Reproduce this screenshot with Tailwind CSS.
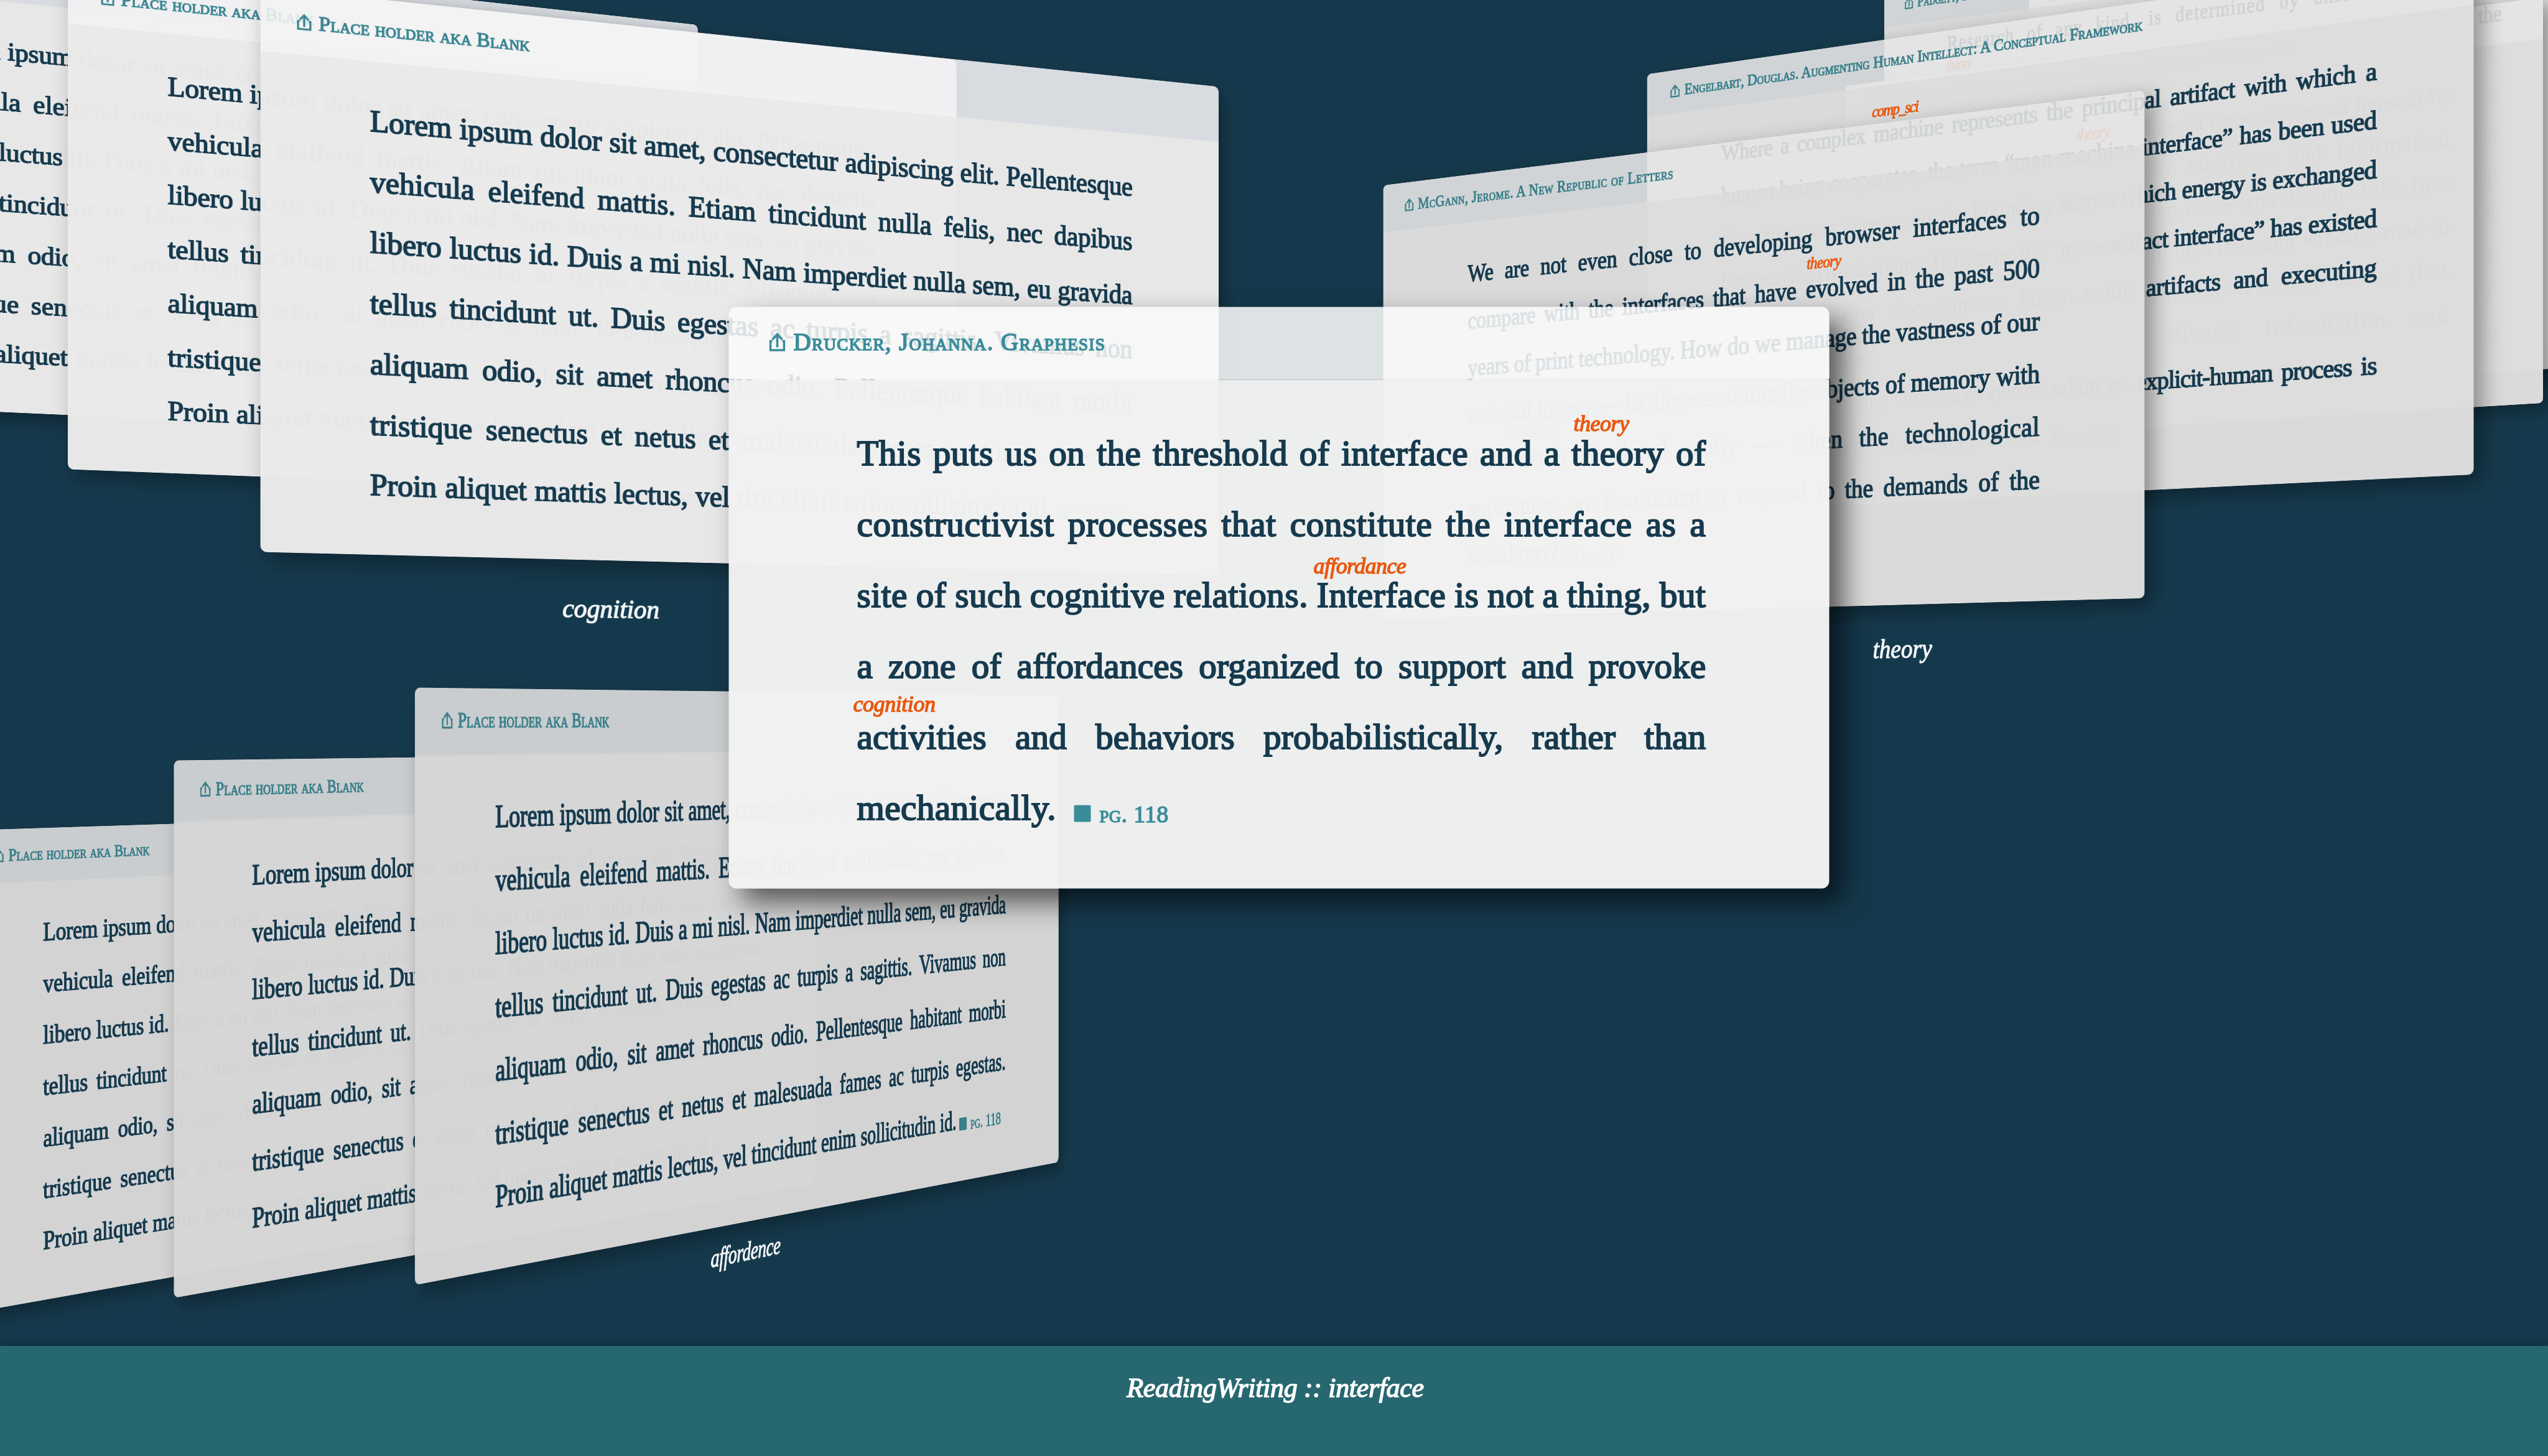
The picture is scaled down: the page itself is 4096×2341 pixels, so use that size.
<!DOCTYPE html>
<html lang="en">
<head>
<meta charset="utf-8">
<title>ReadingWriting :: interface</title>
<script src="https://cdn.jsdelivr.net/npm/@tailwindcss/browser@4"></script>
</head>
<body class="bg-[#15394c]">
<div class="flex h-[2341px] w-[4096px] flex-col overflow-hidden bg-[#15394c] font-['Liberation_Serif',serif]">
  <main id="space" class="relative min-h-0 flex-1"></main>
  <footer class="relative z-10 flex h-[177px] shrink-0 items-start justify-center bg-[#276770] pt-[41px] pl-1 text-[43px] leading-[54px] text-white italic shadow-[0_-4px_16px_rgba(10,25,45,0.35)]">
    <span data-w="477" class="whitespace-nowrap [-webkit-text-stroke:1.5px_#ffffff]" style="font-size:44px">ReadingWriting :: interface</span>
  </footer>
</div>

<script>
// Colour themes, one per wall of the space
const themes = {
  center: { head: 'bg-[#f9f9f9]/88', body: 'bg-[#f1f1f1]/[0.985]', shadow: 'shadow-[22px_22px_44px_rgba(0,0,0,0.6)]', teal: 'text-[#3a8c9a]' },
  left:   { head: 'bg-[#f3f3f4]/88', body: 'bg-[#eaeaea]/[0.985]', shadow: 'shadow-[12px_18px_40px_rgba(0,0,0,0.32)]', teal: 'text-[#3a8591]' },
  right:  { head: 'bg-[#e4e4e4]/90', body: 'bg-[#dcdcdc]/[0.985]', shadow: 'shadow-[18px_16px_44px_rgba(0,0,0,0.36)]', teal: 'text-[#3a808b]' },
  below:  { head: 'bg-[#dddddd]/90', body: 'bg-[#d5d5d5]/[0.985]', shadow: 'shadow-[12px_18px_40px_rgba(0,0,0,0.32)]', teal: 'text-[#3a7f8a]' }
};

const lorem = {
  w: 1960, h: 1035, head: 117, lead: 112.9, size: 57, top: 55, left: 197, width: 1562,
  title: 'Place holder aka Blank', titleW: 391, titleSize: 38,
  lines: [
    ['Lorem ipsum dolor sit amet, consectetur adipiscing elit. Pellentesque', 15],
    ['vehicula eleifend mattis. Etiam tincidunt nulla felis, nec dapibus', 26],
    ['libero luctus id. Duis a mi nisl. Nam imperdiet nulla sem, eu gravida', 15],
    ['tellus tincidunt ut. Duis egestas ac turpis a sagittis. Vivamus non', 24],
    ['aliquam odio, sit amet rhoncus odio. Pellentesque habitant morbi', 26],
    ['tristique senectus et netus et malesuada fames ac turpis egestas.', 25],
    ['Proin aliquet mattis lectus, vel tincidunt enim sollicitudin id.', 15, 1382]
  ],
  pg: { gap: 10 }
};

const cards = [
  { theme: 'right', quad: [3262,-30, 4300,-175, 4300,540, 3262,590], w: 1960, h: 1035, head: 101, lead: 87.4, size: 46, top: 16, left: 197, width: 1562,
    title: 'Steyerl, Hito. The Spam of the Earth', titleSize: 33, lines: [] },
  { theme: 'right', quad: [3029,-22, 4150,-177, 4150,590, 3029,658], w: 1960, h: 1035, head: 101, lead: 87.4, size: 50, top: 15, left: 197, width: 1562,
    title: 'Padgett, Zuckerman. Research and Discovery', titleSize: 36,
    lines: [
      ['Research of any kind, is determined by unfettered access to', 38], ['the', 0, -1], ['dynamic', 0, -1], ['for', 0, -1], ['that', 0, -1],
      ['giving,', 0, -1], ['their', 0, -1], ['frontier', 0, -1], ['archive’,', 0, -1], ['the', 0, -1]
    ],
    notes: [['theory', 195, 224, 75]] },
  { theme: 'right', quad: [2967,138, 4088,-4, 4088,648, 2967,715], w: 1960, h: 1035, head: 105, lead: 113.5, size: 57, top: 59, left: 236, width: 1489,
    title: 'Lovink, Geert. The society of the query and the Googlization of our lives', titleW: 1217, titleSize: 36,
    lines: [
      ['That the computer would serve media purposes was not foreseen by', 22],
      ['its makers. Today’s clumsy interfaces and information', 38],
      ['overload cannot be blamed on those who designed the first', 20],
      ['machines. For all of us it will be a long and winding road to', 18],
      ['turn the calculator into a universal human device that', 20],
      ['serves our rich and diverse information and', 67],
      ['communication purposes.', 15, 0]
    ],
    notes: [['theory', 1106, 300, 80]] },
  { theme: 'right', quad: [2647.7,119.3, 3976.5,-74, 3976.5,763, 2647.7,826.7], w: 1960, h: 1035, head: 101, lead: 99.4, size: 53, top: 58, left: 205, width: 1557,
    title: 'Engelbart, Douglas. Augmenting Human Intellect: A Conceptual Framework', titleW: 1149, titleSize: 36,
    lines: [
      ['Where a complex machine represents the principal artifact with which a', 21],
      ['human being cooperates, the term “man-machine interface” has been used', 15],
      ['for some years to represent the boundary across which energy is exchanged', 13],
      ['between the two domains. However, the “man-artifact interface” has existed', 13],
      ['for centuries, ever since humans began using artifacts and executing', 28],
      ['complex processes.', 13, 0],
      ['Exchange across this “interface” occurs when an explicit-human process is', 19],
      ['coupled to an explicit-artifact process.', 13, 0]
    ],
    pg: { gap: 24 },
    notes: [['comp_sci', 601, 170, 116], ['theory', 1100, 277, 77]] },
  { theme: 'right', quad: [2223.6,298, 3447.4,145.2, 3447.4,961.8, 2223.6,995], w: 1960, h: 1035, head: 112, lead: 110, size: 57, top: 65, left: 250, width: 1475,
    title: 'McGann, Jerome. A New Republic of Letters', titleW: 718, titleSize: 37,
    lines: [
      ['We are not even close to developing browser interfaces to', 32],
      ['compare with the interfaces that have evolved in the past 500', 24],
      ['years of print technology. How do we manage the vastness of our', 14],
      ['material history — let alone examine the objects of memory with', 15],
      ['their depth in digital acuity — when the technological', 41],
      ['apparatuses are insufficient to respond to the demands of the', 25],
      ['social text?', 15, 0]
    ],
    pg: { gap: 24 },
    label: ['theory', 1330, 1148, 143, 56],
    notes: [['theory', 1166, 298, 85], ['literature', 364, 624, 129]] },
  { theme: 'left', quad: [-273,-112, 1121.7,40, 1121.7,713, -273,650], ...lorem },
  { theme: 'left', quad: [109,-53.5, 1537.5,96.5, 1537.5,809, 109,754.5], ...lorem },
  { theme: 'left', quad: [418.6,-20.8, 1959,139.4, 1959,925, 418.6,887.5], ...lorem, label: ['cognition', 558, 1145, 190, 51] },
  { theme: 'below', quad: [-50,1335, 939,1303.4, 939,1935.6, -50,2111.6], ...lorem },
  { theme: 'below', quad: [279.5,1222.6, 1310,1209.5, 1310,1903.6, 279.5,2086.9], ...lorem },
  { theme: 'below', quad: [666.8,1105.5, 1701.6,1118, 1701.6,1868.6, 666.8,2066.2], ...lorem, label: ['affordence', 783, 1110, 210, 51] },
  { theme: 'center', quad: [1171.5,493.5, 2940,493.5, 2940,1428, 1171.5,1428], w: 1768.5, h: 934.5, head: 117, lead: 113.9, size: 57, top: 61, left: 206, width: 1365,
    title: 'Drucker, Johanna. Graphesis', titleW: 502, titleSize: 39,
    lines: [
      ['This puts us on the threshold of interface and a theory of', 19],
      ['constructivist processes that constitute the interface as a', 22],
      ['site of such cognitive relations. Interface is not a thing, but', 14],
      ['a zone of affordances organized to support and provoke', 25],
      ['activities and behaviors probabilistically, rather than', 46],
      ['mechanically.', 0, 320]
    ],
    pg: { gap: 29 },
    notes: [['theory', 1358, 199.7, 89], ['affordance', 940, 428.7, 149], ['cognition', 200, 650.6, 132]] }
];

// matrix3d that carries a w x h box onto four corners (clockwise from top left)
function project(w, h, [x0, y0, x1, y1, x2, y2, x3, y3]) {
  const dx1 = x1 - x2, dx2 = x3 - x2, sx = x0 - x1 + x2 - x3;
  const dy1 = y1 - y2, dy2 = y3 - y2, sy = y0 - y1 + y2 - y3;
  const d = dx1 * dy2 - dx2 * dy1;
  const g = (sx * dy2 - dx2 * sy) / d, k = (dx1 * sy - sx * dy1) / d;
  return `matrix3d(${[
    (x1 - x0 + g * x1) / w, (y1 - y0 + g * y1) / w, 0, g / w,
    (x3 - x0 + k * x3) / h, (y3 - y0 + k * y3) / h, 0, k / h,
    0, 0, 1, 0,
    x0, y0, 0, 1
  ].map(n => n.toFixed(9)).join(',')})`;
}

const icon = `<svg viewBox="0 0 26 31" class="h-[31px] w-[26px] shrink-0" fill="none" stroke="currentColor" stroke-width="3.6">
  <path d="M5 14H2V28.5H24V14H21"/><path d="M13 24V4"/><path d="M5 11.5L13 3L21 11.5"/></svg>`;

const space = document.getElementById('space');

for (const c of cards) {
  const t = themes[c.theme];
  const lines = c.lines.map(([text, gap, width], i) => {
    const w = width === undefined ? c.width : width;
    const last = i === c.lines.length - 1;
    const words = text.split(' ').map(s => `<span>${s}</span>`).join('');
    const pg = last && c.pg ? `<span class="flex translate-y-[4px] items-baseline gap-[14px] ${t.teal}" style="margin-left:${c.pg.gap}px">
        <i class="block size-[27px] rounded-[2px] bg-current"></i>
        <span data-w="111" class="[font-variant-caps:small-caps] [-webkit-text-stroke:1.4px_currentColor]" style="font-size:38px">pg. 118</span></span>` : '';
    if (w === -1) return `<div class="flex items-baseline justify-end">${words}</div>`;
    const row = w === 0
      ? `<span class="flex" style="column-gap:${gap}px">${words}</span>`
      : `<span class="flex justify-between" data-row="${w}" data-gap="${gap}" style="width:${w}px">${words}</span>`;
    return `<div class="flex items-baseline">${row}${pg}</div>`;
  }).join('');
  const notes = (c.notes || []).map(([s, x, y, w]) =>
    `<span data-w="${w}" class="absolute leading-[40px] whitespace-nowrap text-[#e9580f] italic [-webkit-text-stroke:1.4px_#e9580f]" style="left:${x}px;top:${y - 32.5}px;font-size:36px">${s}</span>`).join('');
  const label = c.label
    ? `<span data-w="${c.label[3]}" class="absolute leading-[60px] whitespace-nowrap text-white/95 italic [-webkit-text-stroke:1.5px_#f4f6f7]" style="left:${c.label[1]}px;top:${c.label[2] - 30 - c.label[4] * 0.3375}px;font-size:${c.label[4]}px">${c.label[0]}</span>` : '';
  const fit = c.titleW ? `data-w="${c.titleW}"` : '';
  const el = document.createElement('article');
  el.className = `absolute top-0 left-0 flex origin-top-left flex-col rounded-[12px] ${t.shadow}`;
  el.style.cssText = `width:${c.w}px;height:${c.h}px;transform:${project(c.w, c.h, c.quad)}`;
  el.innerHTML = `
    <header class="flex shrink-0 items-center gap-[13px] rounded-t-[12px] pb-[5px] pl-[65px] ${t.head} ${t.teal}" style="height:${c.head}px">
      ${icon}<h2 class="whitespace-nowrap [font-variant-caps:small-caps] [-webkit-text-stroke:1.6px_currentColor]" style="font-size:${c.titleSize}px"><span ${fit}>${c.title}</span></h2>
    </header>
    <section class="min-h-0 flex-1 rounded-b-[12px] whitespace-nowrap text-[#163a4e] [-webkit-text-stroke:2.1px_#163a4e] ${t.body}"
      style="padding:${c.top}px 0 0 ${c.left}px;font-size:${c.size}px;line-height:${c.lead}px"><div style="width:${c.width}px">${lines}</div></section>
    ${notes}${label}`;
  space.appendChild(el);
}

// Track each run of text so it fills its measure
function track() {
  for (const row of document.querySelectorAll('[data-row]')) {
    row.style.letterSpacing = '0px';
    const spans = [...row.children];
    const natural = spans.reduce((n, s) => n + s.offsetWidth, 0);
    const chars = spans.reduce((n, s) => n + s.textContent.length, 0);
    const room = row.dataset.row - row.dataset.gap * (spans.length - 1);
    row.style.letterSpacing = ((room - natural) / chars).toFixed(3) + 'px';
  }
  for (const el of document.querySelectorAll('[data-w]')) {
    el.style.letterSpacing = '0px';
    el.style.letterSpacing = ((el.dataset.w - el.offsetWidth) / el.textContent.length).toFixed(3) + 'px';
  }
}
track();
requestAnimationFrame(track);
addEventListener('load', () => { track(); setTimeout(track, 50); });
// The stylesheet can arrive after the text: measure again whenever a run changes size
const watcher = new ResizeObserver(track);
document.querySelectorAll('header, footer, section').forEach(el => watcher.observe(el));
</script>
</body>
</html>
